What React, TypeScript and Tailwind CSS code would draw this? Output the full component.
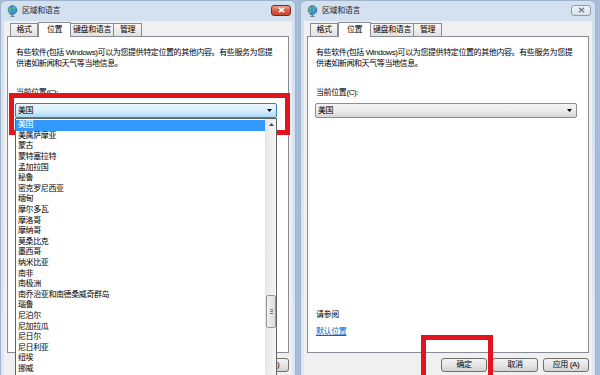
import React from 'react';

const countries = [
  '美国', '美属萨摩亚', '蒙古', '蒙特塞拉特', '孟加拉国', '秘鲁', '密克罗尼西亚', '缅甸',
  '摩尔多瓦', '摩洛哥', '摩纳哥', '莫桑比克', '墨西哥', '纳米比亚', '南非', '南极洲',
  '南乔治亚和南德桑威奇群岛', '瑙鲁', '尼泊尔', '尼加拉瓜', '尼日尔', '尼日利亚', '纽埃', '挪威',
];

const GlobeIcon = () => (
  <svg width="11" height="12" viewBox="0 0 11 12">
    <circle cx="5.5" cy="5" r="4.3" fill="#3b93d8" stroke="#1d5f9c" strokeWidth="0.8" />
    <path d="M3 2.2c1 .2 1.6 1 1.2 1.8-.4.8-1.6.7-1.4 1.8.2.9 1.2 1 1 2-.2.6-.8.6-1.3.2C1.7 7 1.3 5.6 1.6 4.3 1.8 3.3 2.3 2.4 3 2.2z" fill="#69c04a" />
    <path d="M6.6 1.3c1 .2 1.9 1 2.3 1.9-.5.3-1.2 0-1.6.6-.3.5.3 1.1 0 1.6-.3.4-1 .1-1.2-.5-.2-.7.4-1.3.1-2-.2-.5-.5-1-.4-1.6z" fill="#69c04a" />
    <path d="M2.2 8.6c.9.9 2 1.3 3.3 1.3M5.5 9.9v1.3M3.5 11.4h4" fill="none" stroke="#5a6b7d" strokeWidth="0.9" />
  </svg>
);

const DownArrow = () => (
  <svg width="5" height="3" viewBox="0 0 5 3">
    <path d="M0 0h5L2.5 3z" fill="#000" />
  </svg>
);

const Dialog = ({ active, open }: { active: boolean; open: boolean }) => {
  const tabs = ['格式', '位置', '键盘和语言', '管理'];
  const widths = ['w-[28px]', 'w-[33px]', 'w-[44px]', 'w-[29px]'];

  return (
    <div className="relative flex h-[400px] w-[296px] shrink-0 flex-col rounded-t-[6px] border border-[#9fb3cb] bg-gradient-to-b from-[#d3e0ef] via-[#dbe5f1] to-[#dfe8f2] px-[3px]">
      {/* title bar */}
      <div className="flex h-[20px] items-center pl-[3px] pr-[1px]">
        <GlobeIcon />
        <span className="ml-[4px] text-[8px] tracking-[-0.4px] text-[#1e1e1e]">区域和语言</span>
        {active ? (
          <div className="ml-auto mt-[-2px] flex h-[11px] w-[20px] items-center justify-center rounded-[3px] border border-[#7a2a20] bg-gradient-to-b from-[#e9a593] via-[#d2614c] to-[#c7432c]">
            <svg width="7" height="6" viewBox="0 0 7 6">
              <path d="M1 0.8l5 4.4M6 0.8l-5 4.4" stroke="#fff" strokeWidth="1.6" />
            </svg>
          </div>
        ) : (
          <div className="ml-auto mt-[-2px] flex h-[11px] w-[20px] items-center justify-center rounded-[3px] border border-[#8d9aab] bg-gradient-to-b from-[#f1f4f8] to-[#d9e1ea]">
            <svg width="7" height="6" viewBox="0 0 7 6">
              <path d="M1 0.8l5 4.4M6 0.8l-5 4.4" stroke="#6f7a86" strokeWidth="1.2" fill="none" />
            </svg>
          </div>
        )}
      </div>

      {/* client area */}
      <div className="flex flex-1 flex-col bg-[#f0f0f0] px-[3px] pt-[1px]">
        <div className="flex h-[14px] items-end pl-[3px]">
          {tabs.map((t, i) =>
            i === 1 ? (
              <div
                key={t}
                className={`${widths[i]} relative z-10 -mb-px flex h-[15px] items-center justify-center border border-b-0 border-[#898c95] bg-white text-[8px] tracking-[-0.4px] text-black`}
              >
                {t}
              </div>
            ) : (
              <div
                key={t}
                className={`${widths[i]} -ml-px flex h-[13px] items-center justify-center border border-b-0 border-[#898c95] bg-gradient-to-b from-[#f7f7f7] to-[#e2e2e2] text-[8px] tracking-[-0.4px] text-black first:ml-0`}
              >
                {t}
              </div>
            )
          )}
        </div>

        {/* tab panel */}
        <div className="flex h-[317px] flex-col border border-[#898c95] bg-white px-[8px] pt-[10px] pb-[15px] text-[8px] leading-[11px] tracking-[-0.4px] text-black">
          <div className="whitespace-nowrap">有些软件(包括 Windows)可以为您提供特定位置的其他内容。有些服务为您提</div>
          <div className="whitespace-nowrap">供诸如新闻和天气等当地信息。</div>
          <div className="mt-[18px]">当前位置(C):</div>

          <div className="relative -ml-px mt-[5px] w-[262px]">
            <div
              className={`flex h-[15px] items-center justify-between rounded-[2px] border pl-[2px] pr-[4px] ${
                open
                  ? 'border-[#3c7fb1] bg-gradient-to-b from-[#eaf6fd] via-[#d9f0fc] to-[#a8d9f4]'
                  : 'border-[#8e8f8f] bg-gradient-to-b from-[#f4f4f4] via-[#ececec] to-[#d6d6d6]'
              }`}
            >
              <span>美国</span>
              <DownArrow />
            </div>

            {open && (
              <div className="absolute left-0 top-[15px] z-20 flex h-[270px] w-[262px] border border-[#646464] bg-white">
                <div className="flex flex-1 flex-col pt-[1px]">
                  {countries.map((c, i) => (
                    <div
                      key={c}
                      className={`flex h-[10.6px] shrink-0 items-center whitespace-nowrap pl-[2px] leading-[10px] ${
                        i === 0 ? 'bg-[#3399ff] text-white' : 'text-black'
                      }`}
                    >
                      {c}
                    </div>
                  ))}
                </div>
                <div className="flex w-[11px] flex-col border-l border-[#e4e4e4] bg-gradient-to-r from-[#e9e9e9] to-[#f5f5f5]">
                  <div className="flex h-[11px] items-center justify-center">
                    <svg width="5" height="3" viewBox="0 0 5 3">
                      <path d="M0 3h5L2.5 0z" fill="#4d4d4d" />
                    </svg>
                  </div>
                  <div className="mt-[165px] flex h-[33px] items-center justify-center rounded-[2px] border border-[#979797] bg-gradient-to-r from-[#f2f2f2] to-[#dcdcdc]">
                    <div className="flex flex-col gap-[1px]">
                      <div className="h-px w-[3px] bg-[#777]" />
                      <div className="h-px w-[3px] bg-[#777]" />
                      <div className="h-px w-[3px] bg-[#777]" />
                    </div>
                  </div>
                </div>
              </div>
            )}
          </div>

          {/* see-also block is hidden under the open list */}
          {open ? (
            <div className="mt-auto h-[28px]" />
          ) : (
            <>
              <div className="mt-auto">请参阅</div>
              <div className="mt-[6px] text-[#0066cc] underline">默认位置</div>
            </>
          )}
        </div>

        {/* buttons */}
        <div className="mt-[5px] flex justify-end gap-[5px] text-[8px] tracking-[-0.4px] text-black">
          {['确定', '取消', '应用 (A)'].map(b => (
            <div
              key={b}
              className="flex h-[14px] w-[46px] items-center justify-center rounded-[3px] border border-[#707070] bg-gradient-to-b from-[#f2f2f2] via-[#e6e6e6] to-[#d2d2d2]"
            >
              {b}
            </div>
          ))}
        </div>
      </div>
    </div>
  );
};

export default function App() {
  return (
    <div className="relative flex h-[375px] w-[600px] gap-[4px] overflow-hidden bg-[#a3bdda] font-[family-name:Liberation_Sans,Noto_Sans_CJK_SC,sans-serif]">
      <Dialog active open />
      <Dialog active={false} open={false} />

      {/* red annotation boxes */}
      <div className="absolute left-[9px] top-[93px] h-[42px] w-[281px] border-[5px] border-[#e3141c]" />
      <div className="absolute left-[421px] top-[335px] h-[50px] w-[72px] border-[5px] border-[#e3141c]" />
    </div>
  );
}
